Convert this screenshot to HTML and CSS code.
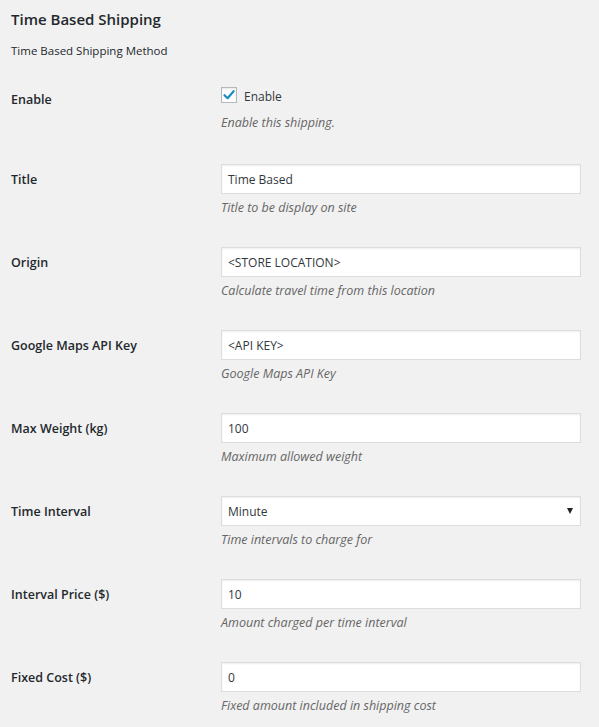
FILE: index.html
```html
<!DOCTYPE html>
<html>
<head>
<meta charset="utf-8">
<link rel="stylesheet" href="styles.css">
</head>
<body>
<div class="page">
  <h2 class="title">Time Based Shipping</h2>
  <p class="intro">Time Based Shipping Method</p>
  <div class="form">
    <div class="row row-check">
      <div class="label">Enable</div>
      <div class="field">
        <label class="check-line"><span class="checkbox"><svg width="14" height="14" viewBox="0 0 14 14"><path d="M2.5 7.2 L5.6 10.2 L11.6 3.2" fill="none" stroke="#1e8cbe" stroke-width="2.2" stroke-linecap="round" stroke-linejoin="round"/></svg></span>Enable</label>
        <p class="desc">Enable this shipping.</p>
      </div>
    </div>
    <div class="row">
      <div class="label">Title</div>
      <div class="field">
        <div class="input">Time Based</div>
        <p class="desc">Title to be display on site</p>
      </div>
    </div>
    <div class="row">
      <div class="label">Origin</div>
      <div class="field">
        <div class="input">&lt;STORE LOCATION&gt;</div>
        <p class="desc">Calculate travel time from this location</p>
      </div>
    </div>
    <div class="row">
      <div class="label">Google Maps API Key</div>
      <div class="field">
        <div class="input">&lt;API KEY&gt;</div>
        <p class="desc">Google Maps API Key</p>
      </div>
    </div>
    <div class="row">
      <div class="label">Max Weight (kg)</div>
      <div class="field">
        <div class="input">100</div>
        <p class="desc">Maximum allowed weight</p>
      </div>
    </div>
    <div class="row">
      <div class="label">Time Interval</div>
      <div class="field">
        <div class="input select">Minute<span class="arrow"></span></div>
        <p class="desc">Time intervals to charge for</p>
      </div>
    </div>
    <div class="row">
      <div class="label">Interval Price ($)</div>
      <div class="field">
        <div class="input">10</div>
        <p class="desc">Amount charged per time interval</p>
      </div>
    </div>
    <div class="row">
      <div class="label">Fixed Cost ($)</div>
      <div class="field">
        <div class="input">0</div>
        <p class="desc">Fixed amount included in shipping cost</p>
      </div>
    </div>
  </div>
</div>
</body>
</html>
```
FILE: styles.css
```css
html, body {
  margin: 0;
  padding: 0;
  background: #f1f1f1;
}
body {
  font-family: "Open Sans", "Noto Sans", sans-serif;
  color: #23282d;
}
.page {
  padding: 8px 0 0 11px;
}
.title {
  margin: 0;
  font-size: 15px;
  line-height: 22px;
  font-weight: 600;
}
.intro {
  margin: 11px 0 0;
  font-size: 11.5px;
  line-height: 20px;
}
.form {
  margin-top: 6px;
}
.row {
  display: grid;
  grid-template-columns: 210px 360px;
}
.label {
  padding-top: 21px;
  font-size: 12.5px;
  line-height: 20px;
  font-weight: 600;
}
.row-check .label {
  padding-top: 23px;
}
.field {
  padding: 15px 0;
}
.input {
  box-sizing: border-box;
  height: 30px;
  background: #fff;
  border: 1px solid #ddd;
  box-shadow: inset 0 1px 2px rgba(0, 0, 0, 0.07);
  padding: 0 6px;
  font-size: 12px;
  line-height: 29px;
  color: #32373c;
  position: relative;
}
.arrow {
  position: absolute;
  right: 7px;
  top: 11px;
  width: 0;
  height: 0;
  border-left: 3px solid transparent;
  border-right: 3px solid transparent;
  border-top: 6px solid #222;
}
.desc {
  margin: 4px 0 0;
  font-size: 12.5px;
  line-height: 19px;
  font-style: italic;
  color: #666;
}
.check-line {
  display: flex;
  align-items: center;
  height: 28px;
  font-size: 12px;
  gap: 7px;
  color: #32373c;
}
.row-check .desc {
  margin-top: 3px;
}
.row-check .field {
  padding-bottom: 17px;
}
.checkbox {
  box-sizing: border-box;
  width: 16px;
  height: 16px;
  border: 1px solid #b4b9be;
  background: #fff;
  box-shadow: inset 0 1px 2px rgba(0, 0, 0, 0.1);
  display: flex;
  align-items: center;
  justify-content: center;
  margin-top: -2px;
}
```
